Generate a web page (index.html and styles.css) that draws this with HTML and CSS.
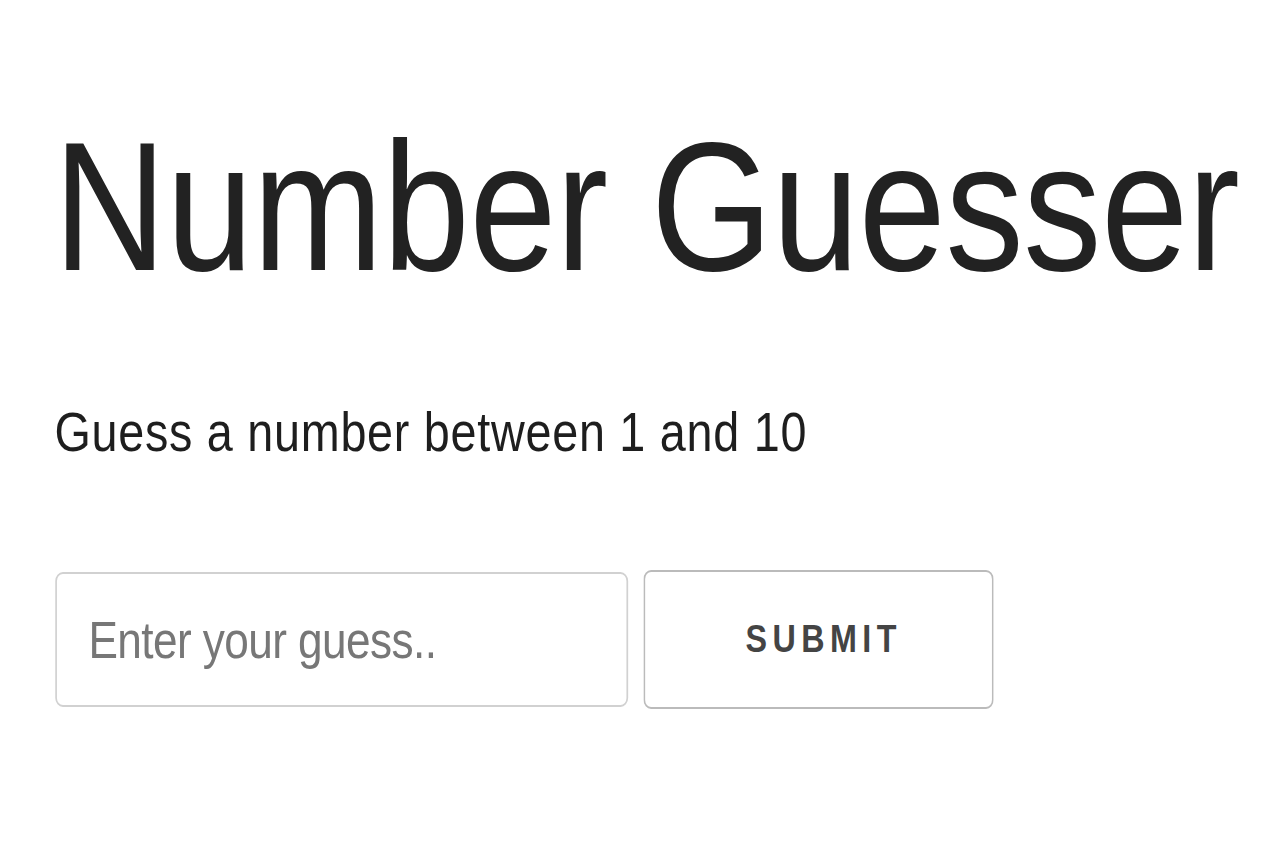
FILE: index.html
```html
<!DOCTYPE html>
<html lang="en">
<head>
<meta charset="utf-8">
<title>Number Guesser</title>
<link rel="stylesheet" href="styles.css">
</head>
<body>
  <main class="game">
    <h1 class="game-title">Number Guesser</h1>
    <p class="game-prompt">Guess a number between 1 and 10</p>
    <form class="guess-form">
      <input class="guess-input" type="number" placeholder="Enter your guess..">
      <button class="guess-submit" type="button">Submit</button>
    </form>
  </main>
</body>
</html>
```

FILE: styles.css
```css
html, body {
  margin: 0;
  padding: 0;
  background: #fff;
  overflow: hidden;
}

body {
  font-family: "Liberation Sans", Arial, Helvetica, sans-serif;
  color: #222;
}

/* The whole game panel is drawn in a slightly condensed width. */
.game {
  padding: 114px 0 0 65px;
  transform: scaleX(0.85);
  transform-origin: 0 0;
  white-space: nowrap;
}

.game-title {
  margin: 0 0 0 -2px;
  font-size: 184px;
  font-weight: 400;
  line-height: 1;
  letter-spacing: -0.4px;
  color: #222;
}

.game-prompt {
  margin: 107px 0 0 -1px;
  font-size: 55px;
  line-height: 1;
  letter-spacing: 0.85px;
  color: #1e1e1e;
}

.guess-form {
  display: flex;
  align-items: center;
  gap: 18px;
  margin-top: 110px;
}

.guess-input {
  box-sizing: border-box;
  width: 674px;
  height: 135px;
  padding: 0 0 0 37px;
  border: 2px solid #d1d1d1;
  border-radius: 9px;
  font-family: inherit;
  font-size: 52px;
  letter-spacing: -0.7px;
  color: #333;
  background: #fff;
  outline: none;
  -moz-appearance: textfield;
}

.guess-input::-webkit-outer-spin-button,
.guess-input::-webkit-inner-spin-button {
  -webkit-appearance: none;
  margin: 0;
}

.guess-input::placeholder {
  color: #777;
}

.guess-submit {
  box-sizing: border-box;
  width: 412px;
  height: 139px;
  padding: 0 0 0 12px;
  border: 2px solid #bbb;
  border-radius: 9px;
  background: #fff;
  font-family: inherit;
  font-size: 38px;
  font-weight: 700;
  letter-spacing: 6.4px;
  text-transform: uppercase;
  color: #444;
}
```
